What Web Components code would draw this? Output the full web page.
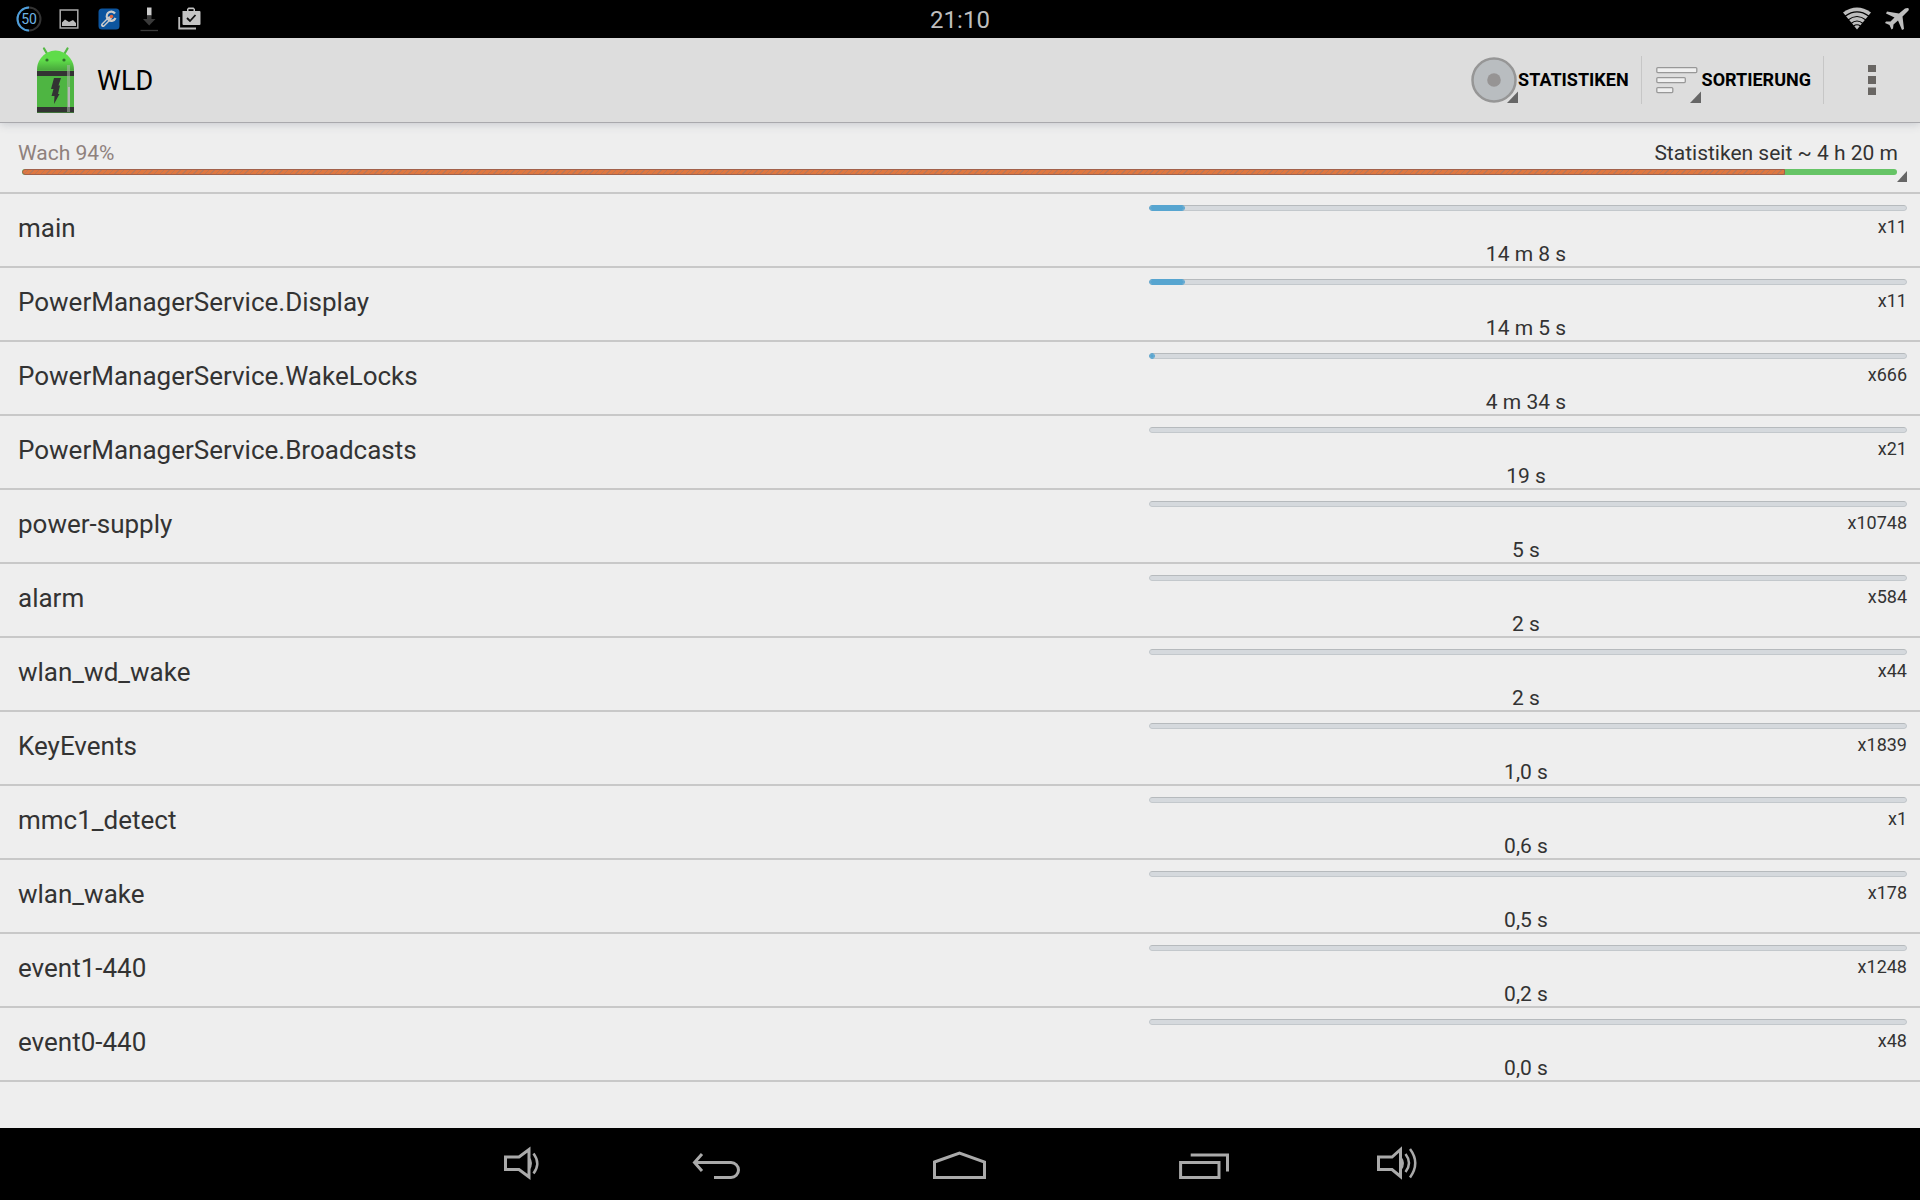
<!DOCTYPE html>
<html lang="de">
<head>
<meta charset="utf-8">
<title>WLD</title>
<style>
html, body { margin: 0; height: 100%; }
body { background: #eee; color: #333; font-family: Roboto, sans-serif; }
</style>
</head>
<body>
<wld-app></wld-app>
<script>
function define(name, html, setup) {
  customElements.define(name, class extends HTMLElement {
    constructor() {
      super();
      this.attachShadow({ mode: 'open' }).innerHTML = html;
    }
    connectedCallback() { if (setup) setup(this, this.shadowRoot); }
  });
}

/* Top system bar: notifications, clock, connectivity */
define('status-bar', `
<style>
:host { display: grid; grid-template-columns: 1fr auto 1fr; align-items: center; height: 38px; background: #000; color: #bebebe; position: relative; z-index: 1; }
.group { display: flex; gap: 12px; padding: 0 9px 0 15px; }
.end { justify-content: flex-end; }
svg { display: block; width: 28px; height: 28px; }
time { font-size: 24px; line-height: 36px; padding-top: 2px; }
text { font: 14px Roboto, sans-serif; }
</style>
<div class="group">
  <svg viewBox="0 0 28 28" fill="none"><circle cx="14" cy="14" r="11.500" stroke="#333" stroke-width="2"/><path d="M14 2.500A11.500 11.500 0 0 0 14 25.500" stroke="#4d9edb" stroke-width="2"/><text x="14" y="19" text-anchor="middle" fill="#6fb4e4">50</text></svg>
  <svg viewBox="0 0 28 28"><rect x="5.200" y="5" width="17.600" height="18" fill="none" stroke="#aaa" stroke-width="1.500"/><path d="M7 21V17.500L10 14.500L14 17L18 15L21 18V21Z" fill="#bbb"/></svg>
  <svg viewBox="0 0 28 28"><rect x="3.500" y="3.500" width="21" height="21" rx="3.500" fill="#0c559f"/><path d="M8 20L15 13" stroke="#ccc" stroke-width="4" stroke-linecap="round"/><path d="M8 20L14 14" stroke="#0c559f" stroke-width="1.200"/><path d="M20 8.500A4.600 4.600 0 1 0 20.500 13" fill="none" stroke="#ccc" stroke-width="2.200"/><circle cx="16.500" cy="11.500" r="1.800" fill="#e0653c"/></svg>
  <svg viewBox="0 0 28 28"><rect x="12" y="2.500" width="4.500" height="8" fill="#ccc"/><path d="M12 10.500h4.500v3.500h4L14.200 20.500L8 14h4z" fill="#3a3a3a"/><path d="M5.500 25.500h17.500" stroke="#3a3a3a" stroke-width="1.300"/></svg>
  <svg viewBox="0 0 28 28"><path d="M4.200 12V23.500H21" fill="none" stroke="#bbb" stroke-width="1.800"/><path d="M7.500 6H12V4L13.500 2.500H18.500L20 4V6H24.500Q25.500 6 25.500 7V19Q25.500 20 24.500 20H8.500Q7.500 20 7.500 19Z" fill="#c4c4c4"/><path d="M13.500 4.200h5V6h-5z" fill="#000"/><path d="M12 13L15 16L20.500 10" fill="none" stroke="#111" stroke-width="1.800"/></svg>
</div>
<time datetime="21:10">21:10</time>
<div class="group end">
  <svg viewBox="0 0 28 28"><path d="M14 24.500L0 7.500Q14 -2.500 28 7.500Z" fill="#bebebe"/><g fill="none" stroke="#000" stroke-width="1.200"><path d="M2 11.200Q14 2.500 26 11.200"/><path d="M5 15Q14 8 23 15"/><path d="M8 18.500Q14 13.500 20 18.500"/><path d="M10.500 21Q14 18.500 17.500 21"/></g></svg>
  <svg viewBox="0 0 28 28"><path d="M24.500 3Q26.500 3 25.500 5.500L19.500 11.500L21 24L19 25L15 15.500L10.500 19.500L10 23.500L8.500 24.500L6.500 20L2 18L3 16.500L7.500 16.500L11.500 12.500L3 8.500L4 6.500L16 8.500L22 3.500Q23 3 24.500 3Z" fill="#bebebe"/></svg>
</div>`);

/* Button with icon, label and spinner corner */
define('action-button', `
<style>
:host { display: flex; border-right: 1px solid #c6c6c6; }
button { display: flex; align-items: center; border: 0; padding: 0 12px; background: none; color: #000; font: bold 18px/24px Roboto, sans-serif; white-space: nowrap; }
</style>
<button type="button"><slot name="icon"></slot><slot></slot></button>`);

define('action-bar', `
<style>
:host { display: flex; align-items: center; height: 84px; background: #ddd; border-bottom: 1px solid #a9a9ad; box-shadow: 0 1px 9px #c4c7cc; position: relative; color: #000; }
h1 { flex: 1; margin: 0; font-size: 27px; font-weight: 400; line-height: 36px; padding-top: 2px; }
svg { display: block; }
.logo { margin: 2px 21px 0 36px; }
action-button { height: 48px; }
.more { width: 96px; height: 84px; border: 0; padding: 0; background: none; display: flex; justify-content: center; align-items: center; }
</style>
<svg class="logo" width="40" height="68" viewBox="0 0 40 68">
  <defs>
    <linearGradient id="head" x1="0" y1="0" x2="0" y2="1"><stop offset="0.500" stop-color="#5fdc4a"/><stop offset="1" stop-color="#49a83c"/></linearGradient>
  </defs>
  <path d="M8 1.500L11.500 7.500M31.500 1.500L28 7.500" stroke="#55b945" stroke-width="2.200" stroke-linecap="round"/>
  <path d="M1 23Q1 16 5 11Q11 3.500 19.500 3.500Q28 3.500 34 11Q38 16 38 23Z" fill="url(#head)"/>
  <circle cx="11" cy="13" r="1.600" fill="#2f6f2b"/><circle cx="28" cy="13" r="1.600" fill="#2f6f2b"/>
  <path d="M1 23h37v43H1z" fill="#4eb542"/>
  <path d="M1 24h37v5H1zM1 60h37v5.500H1z" fill="#333"/>
  <path d="M31 18h3v47h-3z" fill="#aab5a8" opacity=".55"/>
  <path d="M32 40h2v20h-2z" fill="#b8b8b8"/>
  <path d="M18 31H25L22.500 38.500H24L22 47H23.500L18 57L18.500 49H15.500L17.500 42H15Z" fill="#333"/>
</svg>
<h1>WLD</h1>
<action-button>
  <svg slot="icon" width="48" height="48" viewBox="0 0 48 48"><circle cx="24" cy="24" r="21.500" fill="#b9bdc0" stroke="#969696" stroke-width="2.500"/><circle cx="24" cy="24" r="6.800" fill="#969494"/><path d="M48 35.500V47H37Z" fill="#666"/></svg>
  Statistiken
</action-button>
<action-button>
  <svg slot="icon" width="48" height="48" viewBox="0 0 48 48"><g fill="#f0f0f0" stroke="#989898" stroke-width="1.300"><rect x="2.800" y="11.600" width="40" height="5" rx="1"/><rect x="2.800" y="21.600" width="28.500" height="5" rx="1"/><rect x="2.800" y="31.600" width="16" height="5" rx="1"/></g><path d="M47 35.500V47H36Z" fill="#666"/></svg>
  Sortierung
</action-button>
<button class="more" type="button" aria-label="Weitere Optionen"><svg width="8" height="30" viewBox="0 0 8 30"><path d="M0 0h8v7H0zM0 11h8v8H0zM0 22.500h8v7.500H0z" fill="#696663"/></svg></button>`,
(host, root) => root.querySelectorAll('action-button').forEach(b => b.lastChild.textContent = b.lastChild.textContent.trim().toUpperCase()));

/* Share of time awake since the last reset */
define('wake-summary', `
<style>
:host { display: block; height: 71px; border-bottom: 2px solid #c8c8c8; box-sizing: border-box; padding-top: 17px; }
.line { display: flex; justify-content: space-between; padding: 0 22px 0 18px; font-size: 21px; line-height: 26px; }
label { color: #8f817d; }
.meter { display: flex; padding: 3px 13px 0 22px; }
progress { -webkit-appearance: none; appearance: none; display: block; flex: 1; height: 6px; border: 0; border-radius: 3px; overflow: hidden; }
progress::-webkit-progress-bar { background: #66c466; }
progress::-webkit-progress-value { box-sizing: border-box; border: 1px solid #a2614a; border-radius: 3px 0 0 3px; background: repeating-linear-gradient(135deg, #df7740 0 3px, #bb7858 3px 4px); }
svg { display: block; margin-top: 2px; }
</style>
<div class="line"><label for="awake">Wach 94%</label><span>Statistiken seit ~ 4 h 20 m</span></div>
<div class="meter"><progress id="awake" max="100" value="94">94%</progress><svg width="10" height="11" viewBox="0 0 10 11"><path d="M10 0V11H0Z" fill="#666"/></svg></div>`);

/* One wakelock: name, share bar, count and duration */
define('wakelock-row', `
<style>
:host { display: flex; gap: 12px; height: 72px; padding: 0 13px 0 18px; border-bottom: 2px solid #c8c8c8; }
label { flex: 1; font-size: 26px; line-height: 68px; }
.stats { flex: none; width: calc(40vw - 10px); display: flex; flex-direction: column; padding-top: 11px; box-sizing: border-box; }
progress { -webkit-appearance: none; appearance: none; display: block; width: 100%; height: 6px; border: 0; border-radius: 3px; margin-bottom: 4px; overflow: hidden; }
progress::-webkit-progress-bar { background: #d5d9dd; border: 1px solid #c3c8cc; border-top-color: #b6babd; border-radius: 3px; box-sizing: border-box; }
progress::-webkit-progress-value { background: #57a5d0; border-radius: 3px; }
progress.used::-webkit-progress-value { outline: 1px solid #57a5d0; }
.count { align-self: flex-end; font-size: 18px; line-height: 24px; margin-bottom: 3px; }
.time { text-align: center; font-size: 21px; line-height: 24px; padding-right: 4px; }
</style>
<label for="share"></label>
<div class="stats"><progress id="share" max="758"></progress><span class="count"></span><span class="time"></span></div>`,
(host, root) => {
  const bar = root.querySelector('progress');
  root.querySelector('label').textContent = host.getAttribute('name');
  bar.value = host.getAttribute('share');
  bar.classList.toggle('used', bar.value > 0);
  root.querySelector('.count').textContent = 'x' + host.getAttribute('count');
  root.querySelector('.time').textContent = host.getAttribute('time');
});

define('wakelock-list', `
<style>:host { display: block; flex: 1; min-height: 0; overflow: hidden; }</style>
<main></main>`,
(host, root) => {
  const rows = [
    ['main', 34, 11, '14 m 8 s'],
    ['PowerManagerService.Display', 34, 11, '14 m 5 s'],
    ['PowerManagerService.WakeLocks', 4, 666, '4 m 34 s'],
    ['PowerManagerService.Broadcasts', 0, 21, '19 s'],
    ['power-supply', 0, 10748, '5 s'],
    ['alarm', 0, 584, '2 s'],
    ['wlan_wd_wake', 0, 44, '2 s'],
    ['KeyEvents', 0, 1839, '1,0 s'],
    ['mmc1_detect', 0, 1, '0,6 s'],
    ['wlan_wake', 0, 178, '0,5 s'],
    ['event1-440', 0, 1248, '0,2 s'],
    ['event0-440', 0, 48, '0,0 s']
  ];
  root.querySelector('main').innerHTML = rows.map(([name, share, count, time]) =>
    `<wakelock-row name="${name}" share="${share}" count="${count}" time="${time}"></wakelock-row>`).join('');
});

define('navigation-bar', `
<style>
:host { display: flex; justify-content: center; height: 72px; background: #000; }
button { width: 244px; border: 0; padding: 0; background: none; display: flex; justify-content: center; align-items: center; }
.volume { width: 146px; }
svg { display: block; fill: none; stroke: #aaa; stroke-width: 3px; }
</style>
<button class="volume" type="button" aria-label="Leiser"><svg width="48" height="48" viewBox="0 0 48 48"><path d="M8.500 17H22L32 9.500V37L22 29.500H8.500Z"/><path d="M32 17.500Q36.500 23.500 32 29.500Z" fill="#aaa" stroke-width="1.500"/><path d="M36.500 13.500Q44 23.500 36.500 33.500" stroke-width="2.500"/></svg></button>
<button type="button" aria-label="Zurück"><svg width="48" height="48" viewBox="0 0 48 48"><path d="M10 14L2.500 22.500L10 31M2 22.500H39a7.500 7.500 0 0 1 0 15H22"/></svg></button>
<button type="button" aria-label="Startseite"><svg width="56" height="48" viewBox="0 0 56 48"><path d="M2.500 22L27.500 13L52.500 22V37.500H2.500Z"/></svg></button>
<button type="button" aria-label="Letzte Apps"><svg width="56" height="48" viewBox="0 0 56 48"><path d="M4.600 22.400H43V37.500H4.600ZM14.700 15H51.500V31.500"/></svg></button>
<button class="volume" type="button" aria-label="Lauter"><svg width="48" height="48" viewBox="0 0 48 48"><path d="M3.500 17H17L25.500 9.500V36.500L17 29.500H3.500Z"/><path d="M26 17.500Q30.500 23.500 26 29.500Z" fill="#aaa" stroke-width="1.500"/><path d="M30.500 14Q37.500 23 30.500 32M35 9Q45.500 23 35 37.500" stroke-width="2.500"/></svg></button>`);

define('wld-app', `
<style>
:host { display: flex; flex-direction: column; height: 100vh; }
status-bar, action-bar, wake-summary, navigation-bar { flex: none; }
</style>
<status-bar></status-bar>
<action-bar></action-bar>
<wake-summary></wake-summary>
<wakelock-list></wakelock-list>
<navigation-bar></navigation-bar>`);
</script>
</body>
</html>
